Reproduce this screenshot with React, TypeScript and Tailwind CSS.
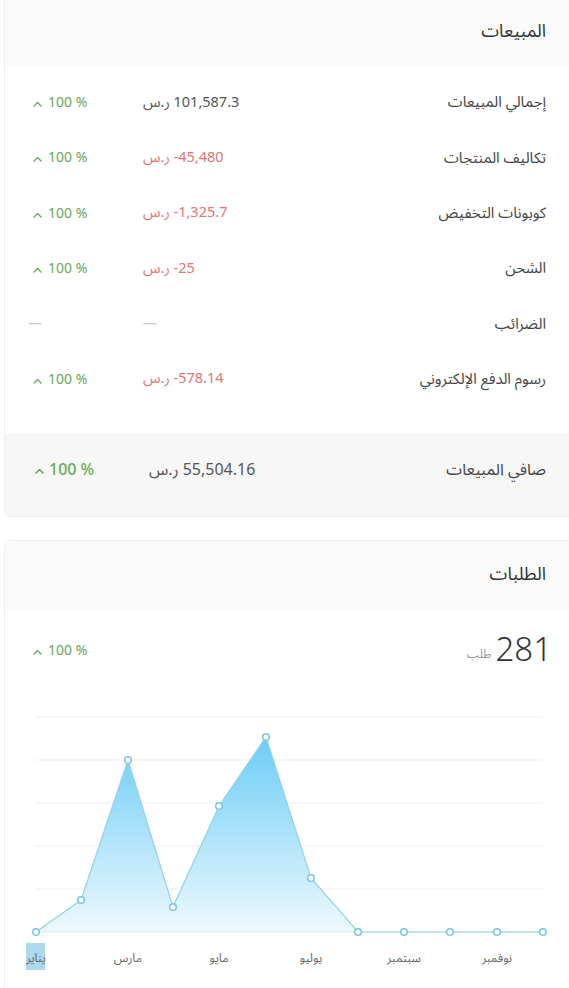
import React from "react";

const FONT = '"Noto Sans Arabic", "Noto Sans", "DejaVu Sans", sans-serif';

function Up({ bold = false }: { bold?: boolean }) {
  return (
    <svg width="9" height="6" viewBox="0 0 9 6" className="shrink-0">
      <polyline
        points="1,5 4.5,1.5 8,5"
        fill="none"
        stroke="#6aa55a"
        strokeWidth={bold ? 1.6 : 1.4}
        strokeLinecap="round"
        strokeLinejoin="round"
      />
    </svg>
  );
}

type Row = { label: string; amount: string | null; neg: boolean };

const rows: Row[] = [
  { label: "إجمالي المبيعات", amount: "101,587.3", neg: false },
  { label: "تكاليف المنتجات", amount: "-45,480", neg: true },
  { label: "كوبونات التخفيض", amount: "-1,325.7", neg: true },
  { label: "الشحن", amount: "-25", neg: true },
  { label: "الضرائب", amount: null, neg: false },
  { label: "رسوم الدفع الإلكتروني", amount: "-578.14", neg: true },
];

const pts: [number, number][] = [
  [36, 932],
  [81, 900],
  [128, 760],
  [173, 907],
  [219, 806],
  [266, 737],
  [311, 878],
  [358, 932],
  [404, 932],
  [450, 932],
  [497, 932],
  [543, 932],
];

const months: [string, number][] = [
  ["يناير", 36],
  ["مارس", 128],
  ["مايو", 219],
  ["يوليو", 311],
  ["سبتمبر", 404],
  ["نوفمبر", 497],
];

function Chart() {
  const line = pts.map((p) => p.join(",")).join(" ");
  const area = `36,932 ${line} 543,932`;
  return (
    <svg width="565" height="300" viewBox="5 692 565 300" className="block">
      <defs>
        <linearGradient id="g" x1="0" y1="737" x2="0" y2="932" gradientUnits="userSpaceOnUse">
          <stop offset="0" stopColor="#6bcdf6" />
          <stop offset="1" stopColor="#eef9fe" />
        </linearGradient>
      </defs>
      {[717, 760, 803, 846, 889].map((y) => (
        <line key={y} x1="36" x2="543" y1={y} y2={y} stroke="#efefef" strokeWidth="1" />
      ))}
      <polygon points={area} fill="url(#g)" />
      <line x1="36" x2="543" y1="932" y2="932" stroke="#e6e6e6" strokeWidth="1" />
      <polyline points={line} fill="none" stroke="#92d2e6" strokeWidth="1.2" />
      {pts.map(([x, y], i) => (
        <circle key={i} cx={x} cy={y} r="3.3" fill="#ffffff" stroke="#78c6de" strokeWidth="1.5" />
      ))}
      <rect x="26" y="943" width="19" height="27" fill="#acd9ec" />
      {months.map(([m, x]) => (
        <text
          key={m}
          x={x}
          y="962"
          textAnchor="middle"
          fontSize="12"
          fill="#666"
          style={{ fontFamily: FONT }}
        >
          {m}
        </text>
      ))}
    </svg>
  );
}

export default function App() {
  return (
    <div className="w-[569px] h-[988px] overflow-hidden bg-white pl-[4px]" style={{ fontFamily: FONT }}>
      {/* Sales card */}
      <div className="w-[570px] -mt-[6px] rounded-[6px] border border-[#efefef] overflow-hidden bg-white">
        <div className="h-[71px] bg-[#fafafa] flex items-center justify-end pr-[27px] pt-[2px]">
          <span dir="rtl" className="text-[18px] text-[#333]">
            المبيعات
          </span>
        </div>
        <div className="pt-[9px] pb-[27px]">
          {rows.map((r) => (
            <div key={r.label} className="h-[55.3px] flex items-center pl-[23px] pr-[27px]">
              <div className="w-[115px] flex items-center">
                {r.amount === null ? (
                  <span className="text-[#c8c8c8] text-[14px]">—</span>
                ) : (
                  <>
                    <span className="w-[20px] flex justify-start pl-[5px] pt-[3px]">
                      <Up />
                    </span>
                    <span className="text-[14px] text-[#6aa55a]">100 %</span>
                  </>
                )}
              </div>
              <div className="w-[200px] flex">
                {r.amount === null ? (
                  <span className="text-[#c8c8c8] text-[14px]">—</span>
                ) : (
                  <span
                    dir="rtl"
                    className={`inline-block text-[14.5px] ${r.neg ? "text-[#e07575]" : "text-[#555]"}`}
                  >
                    <bdi dir="ltr">{r.amount}</bdi> ر.س
                  </span>
                )}
              </div>
              <div dir="rtl" className="flex-1 text-right text-[15px] text-[#444]">
                {r.label}
              </div>
            </div>
          ))}
        </div>
        <div className="h-[82px] bg-[#f7f7f7] flex items-start pt-[24px] pl-[30px] pr-[27px]">
          <div className="w-[114px] flex items-center">
            <span className="w-[14px] flex pt-[3px]">
              <Up bold />
            </span>
            <span className="text-[16px] font-medium text-[#66ad55]">100 %</span>
          </div>
          <div className="w-[200px] flex">
            <span dir="rtl" className="inline-block text-[16px] text-[#555]">
              55,504.16 ر.س
            </span>
          </div>
          <div dir="rtl" className="flex-1 text-right text-[16px] text-[#444]">
            صافي المبيعات
          </div>
        </div>
      </div>

      {/* Orders card */}
      <div className="w-[570px] mt-[23px] rounded-[6px] border border-[#efefef] overflow-hidden bg-white">
        <div className="h-[68px] bg-[#fafafa] flex items-center justify-end pr-[27px]">
          <span dir="rtl" className="text-[18px] text-[#333]">
            الطلبات
          </span>
        </div>
        <div className="h-[83px] flex items-center pl-[23px] pr-[21px]">
          <div className="flex items-center flex-1">
            <span className="w-[20px] flex pl-[5px] pt-[3px]">
              <Up />
            </span>
            <span className="text-[14px] text-[#6aa55a]">100 %</span>
          </div>
          <div className="flex items-end gap-[4px]">
            <span dir="rtl" className="text-[12px] text-[#999] pb-[3px]">
              طلب
            </span>
            <span className="text-[33px] leading-none text-[#333] font-light">281</span>
          </div>
        </div>
        <Chart />
      </div>
    </div>
  );
}
